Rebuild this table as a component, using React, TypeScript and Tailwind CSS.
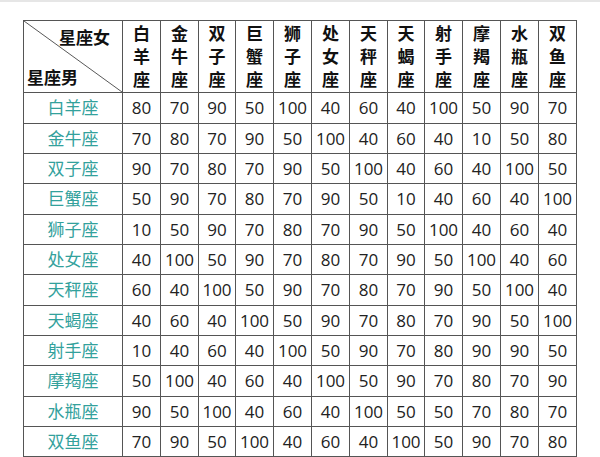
import React from "react";

const cols = ["白羊座", "金牛座", "双子座", "巨蟹座", "狮子座", "处女座", "天秤座", "天蝎座", "射手座", "摩羯座", "水瓶座", "双鱼座"];
const colW = [38, 38, 37, 38, 38, 38, 38, 37, 38, 38, 38, 38];
const rowH = [31, 30, 30, 31, 30, 30, 31, 30, 30, 31, 30, 30];

const data: number[][] = [
  [80, 70, 90, 50, 100, 40, 60, 40, 100, 50, 90, 70],
  [70, 80, 70, 90, 50, 100, 40, 60, 40, 10, 50, 80],
  [90, 70, 80, 70, 90, 50, 100, 40, 60, 40, 100, 50],
  [50, 90, 70, 80, 70, 90, 50, 10, 40, 60, 40, 100],
  [10, 50, 90, 70, 80, 70, 90, 50, 100, 40, 60, 40],
  [40, 100, 50, 90, 70, 80, 70, 90, 50, 100, 40, 60],
  [60, 40, 100, 50, 90, 70, 80, 70, 90, 50, 100, 40],
  [40, 60, 40, 100, 50, 90, 70, 80, 70, 90, 50, 100],
  [10, 40, 60, 40, 100, 50, 90, 70, 80, 90, 90, 50],
  [50, 100, 40, 60, 40, 100, 50, 90, 70, 80, 70, 90],
  [90, 50, 100, 40, 60, 40, 100, 50, 50, 70, 80, 70],
  [70, 90, 50, 100, 40, 60, 40, 100, 50, 90, 70, 80],
];

export default function App() {
  return (
    <div
      className="w-[600px] h-[457px] bg-white overflow-hidden border-t-2 border-[#e6e6e6] pl-[23px] pt-[18px]"
      style={{ fontFamily: '"Open Sans", "Noto Sans CJK SC", sans-serif' }}
    >
      <table className="table-fixed border-collapse w-[554px]">
        <colgroup>
          <col className="w-[99px]" />
          {colW.map((w, i) => (
            <col key={i} style={{ width: w }} />
          ))}
        </colgroup>
        <thead>
          <tr className="h-[72px]">
            <th className="relative border border-[#555] p-0 align-top font-bold text-[#111]">
              <svg className="absolute inset-0 w-full h-full" viewBox="0 0 99 72" preserveAspectRatio="none">
                <line x1="0" y1="0" x2="99" y2="72" stroke="#555" strokeWidth="1" />
              </svg>
              <div className="flex flex-col h-[71px] text-[17px] leading-[20px]">
                <div className="text-right pr-[12px] pt-[7px]">星座女</div>
                <div className="mt-auto text-left pl-[3px] pb-[4px]">星座男</div>
              </div>
            </th>
            {cols.map((c) => (
              <th key={c} className="border border-[#555] p-0 text-center font-bold text-[17px] leading-[23px] text-[#111]">
                {c.split("").map((ch, i) => (
                  <div key={i}>{ch}</div>
                ))}
              </th>
            ))}
          </tr>
        </thead>
        <tbody>
          {data.map((row, r) => (
            <tr key={r} style={{ height: rowH[r] }}>
              <td className="border border-[#555] p-0 text-center text-[17px] text-[#33a19c]">{cols[r]}</td>
              {row.map((v, i) => (
                <td key={i} className="border border-[#555] p-0 text-center text-[17px] text-[#222]">
                  {v}
                </td>
              ))}
            </tr>
          ))}
        </tbody>
      </table>
    </div>
  );
}
